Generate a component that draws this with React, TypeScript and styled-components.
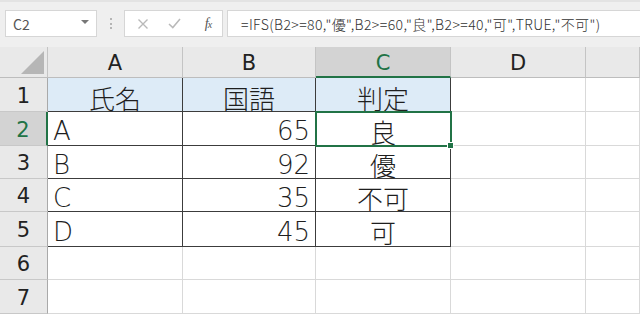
import React from 'react'
import styled, { createGlobalStyle } from 'styled-components'

const GREEN = '#217346'
const GRID = '#d9d9d9'
const INK = '#3c3c3c'

const GlobalStyle = createGlobalStyle`
  html, body {
    margin: 0;
    padding: 0;
    background: #fff;
  }
  body {
    font-family: "Noto Sans CJK JP", sans-serif;
  }
`

const Page = styled.div`
  display: flex;
  flex-direction: column;
  width: 640px;
  height: 314px;
  overflow: hidden;
`

// formula bar
const FormulaBar = styled.div`
  display: flex;
  align-items: flex-start;
  box-sizing: border-box;
  height: 47px;
  padding: 10px 0 0 5px;
  background: #efefef;
  border-top: 2px solid #e3e3e3;
`

const Box = styled.div`
  box-sizing: border-box;
  height: 27px;
  background: #fff;
  border: 1px solid #d6d6d6;
  display: flex;
  align-items: center;
  margin-top: -2px;
`

const NameBox = styled(Box)`
  width: 92px;
  padding: 0 7px 0 7px;
  justify-content: space-between;
  font-size: 14px;
  color: #555;
`

const Caret = styled.span`
  width: 0;
  height: 0;
  border-left: 4px solid transparent;
  border-right: 4px solid transparent;
  border-top: 4px solid #777;
  margin-top: -3px;
`

const Grip = styled.div`
  width: 27px;
  height: 27px;
  margin-top: -2px;
  display: flex;
  align-items: center;
  justify-content: center;
  span {
    width: 0;
    height: 11px;
    border-left: 2px dotted #b5b5b5;
  }
`

const ButtonBox = styled(Box)`
  width: 99px;
  padding-left: 11px;
  gap: 17px;
`

const IconSlot = styled.span<{ w: number }>`
  width: ${({ w }) => w}px;
  display: flex;
  justify-content: center;
  color: #b9b9b9;
`

const Fx = styled.span`
  font-family: "Liberation Serif", serif;
  font-style: italic;
  font-size: 14px;
  color: #555;
  letter-spacing: -1px;
  small {
    font-size: 10px;
  }
`

const FormulaBox = styled(Box)`
  flex: 1;
  margin-left: 4px;
  border-right: none;
  padding-left: 13px;
  font-size: 14px;
  font-weight: 300;
  letter-spacing: 0.4px;
  color: #333;
  white-space: nowrap;
`

// sheet
const Sheet = styled.div`
  display: grid;
  grid-template-columns: 48px 135px 133px 135px 135px 1fr;
  grid-template-rows: 31px 34px 34px 33px 33px 35px 33px 34px;
`

const Corner = styled.div`
  box-sizing: border-box;
  background: #e9e9e9;
  border-right: 1px solid #c4c4c4;
  border-bottom: 1px solid #bdbdbd;
  display: flex;
  justify-content: flex-end;
  align-items: flex-end;
  padding: 0 3px 3px 0;
`

const ColHeader = styled.div<{ selected?: boolean }>`
  box-sizing: border-box;
  display: flex;
  align-items: center;
  justify-content: center;
  padding-top: 2px;
  background: ${({ selected }) => (selected ? '#d3d3d3' : '#e9e9e9')};
  color: ${({ selected }) => (selected ? GREEN : '#222')};
  border-right: 1px solid #c4c4c4;
  border-bottom: ${({ selected }) => (selected ? `2px solid ${GREEN}` : '1px solid #bdbdbd')};
  font-family: "DejaVu Sans", sans-serif;
  font-size: 21px;
`

const RowHeader = styled.div<{ selected?: boolean }>`
  box-sizing: border-box;
  display: flex;
  align-items: center;
  justify-content: center;
  padding-top: 2px;
  background: ${({ selected }) => (selected ? '#d3d3d3' : '#e9e9e9')};
  color: ${({ selected }) => (selected ? GREEN : '#222')};
  border-right: ${({ selected }) => (selected ? `2px solid ${GREEN}` : '1px solid #a9a9a9')};
  border-bottom: 1px solid #c8c8c8;
  font-family: "DejaVu Sans", sans-serif;
  font-size: 21px;
`

const Cell = styled.div<{
  align?: 'left' | 'right' | 'center'
  fill?: boolean
  ruled?: boolean
  active?: boolean
}>`
  box-sizing: border-box;
  position: relative;
  display: flex;
  align-items: center;
  padding: 5px 5px 0 5px;
  justify-content: ${({ align }) =>
    align === 'right' ? 'flex-end' : align === 'center' ? 'center' : 'flex-start'};
  background: ${({ fill }) => (fill ? '#ddebf7' : '#fff')};
  border-right: 1px solid ${({ ruled }) => (ruled ? INK : GRID)};
  border-bottom: 1px solid ${({ ruled }) => (ruled ? INK : GRID)};
  font-family: "DejaVu Sans", "Noto Sans CJK JP", sans-serif;
  font-size: 26px;
  font-weight: 300;
  color: #1e1e1e;
  white-space: nowrap;
  ${({ active }) =>
    active &&
    `
    outline: 2px solid ${GREEN};
    outline-offset: -1px;
    z-index: 2;
    &::after {
      content: '';
      position: absolute;
      right: -4px;
      bottom: -4px;
      width: 5px;
      height: 5px;
      background: ${GREEN};
      border: 1px solid #fff;
    }
  `}
`

type Align = 'left' | 'right' | 'center'

const columns = ['A', 'B', 'C', 'D', 'E']
const aligns: Align[] = ['left', 'right', 'center']

const rows: string[][] = [
  ['氏名', '国語', '判定'],
  ['A', '65', '良'],
  ['B', '92', '優'],
  ['C', '35', '不可'],
  ['D', '45', '可'],
  [],
  [],
]

const formula = '=IFS(B2>=80,"優",B2>=60,"良",B2>=40,"可",TRUE,"不可")'

const App: React.FC = () => {
  return (
    <Page>
      <GlobalStyle />
      <FormulaBar>
        <NameBox>
          C2
          <Caret />
        </NameBox>
        <Grip>
          <span />
        </Grip>
        <ButtonBox>
          <IconSlot w={14}>
            <svg width="12" height="12" viewBox="0 0 12 12">
              <path d="M1.5 1.5 L10.5 10.5 M10.5 1.5 L1.5 10.5" stroke="currentColor" strokeWidth="1.4" />
            </svg>
          </IconSlot>
          <IconSlot w={14}>
            <svg width="13" height="11" viewBox="0 0 13 11">
              <path d="M1 6 L4.8 9.6 L12 1" stroke="currentColor" strokeWidth="1.5" fill="none" />
            </svg>
          </IconSlot>
          <IconSlot w={20}>
            <Fx>
              f<small>x</small>
            </Fx>
          </IconSlot>
        </ButtonBox>
        <FormulaBox>{formula}</FormulaBox>
      </FormulaBar>
      <Sheet>
        <Corner>
          <svg width="23" height="23" viewBox="0 0 23 23">
            <polygon points="23,0 23,23 0,23" fill="#b6b6b6" />
          </svg>
        </Corner>
        {columns.map((c) => (
          <ColHeader key={c} selected={c === 'C'}>
            {c === 'E' ? '' : c}
          </ColHeader>
        ))}
        {rows.map((r, i) => (
          <React.Fragment key={i}>
            <RowHeader selected={i === 1}>{i + 1}</RowHeader>
            {columns.map((c, j) => {
              const inTable = j < 3 && i < 5
              return (
                <Cell
                  key={c}
                  align={i === 0 ? 'center' : aligns[j]}
                  fill={i === 0 && j < 3}
                  ruled={inTable}
                  active={i === 1 && j === 2}
                >
                  {inTable ? r[j] : ''}
                </Cell>
              )
            })}
          </React.Fragment>
        ))}
      </Sheet>
    </Page>
  )
}

export default App
